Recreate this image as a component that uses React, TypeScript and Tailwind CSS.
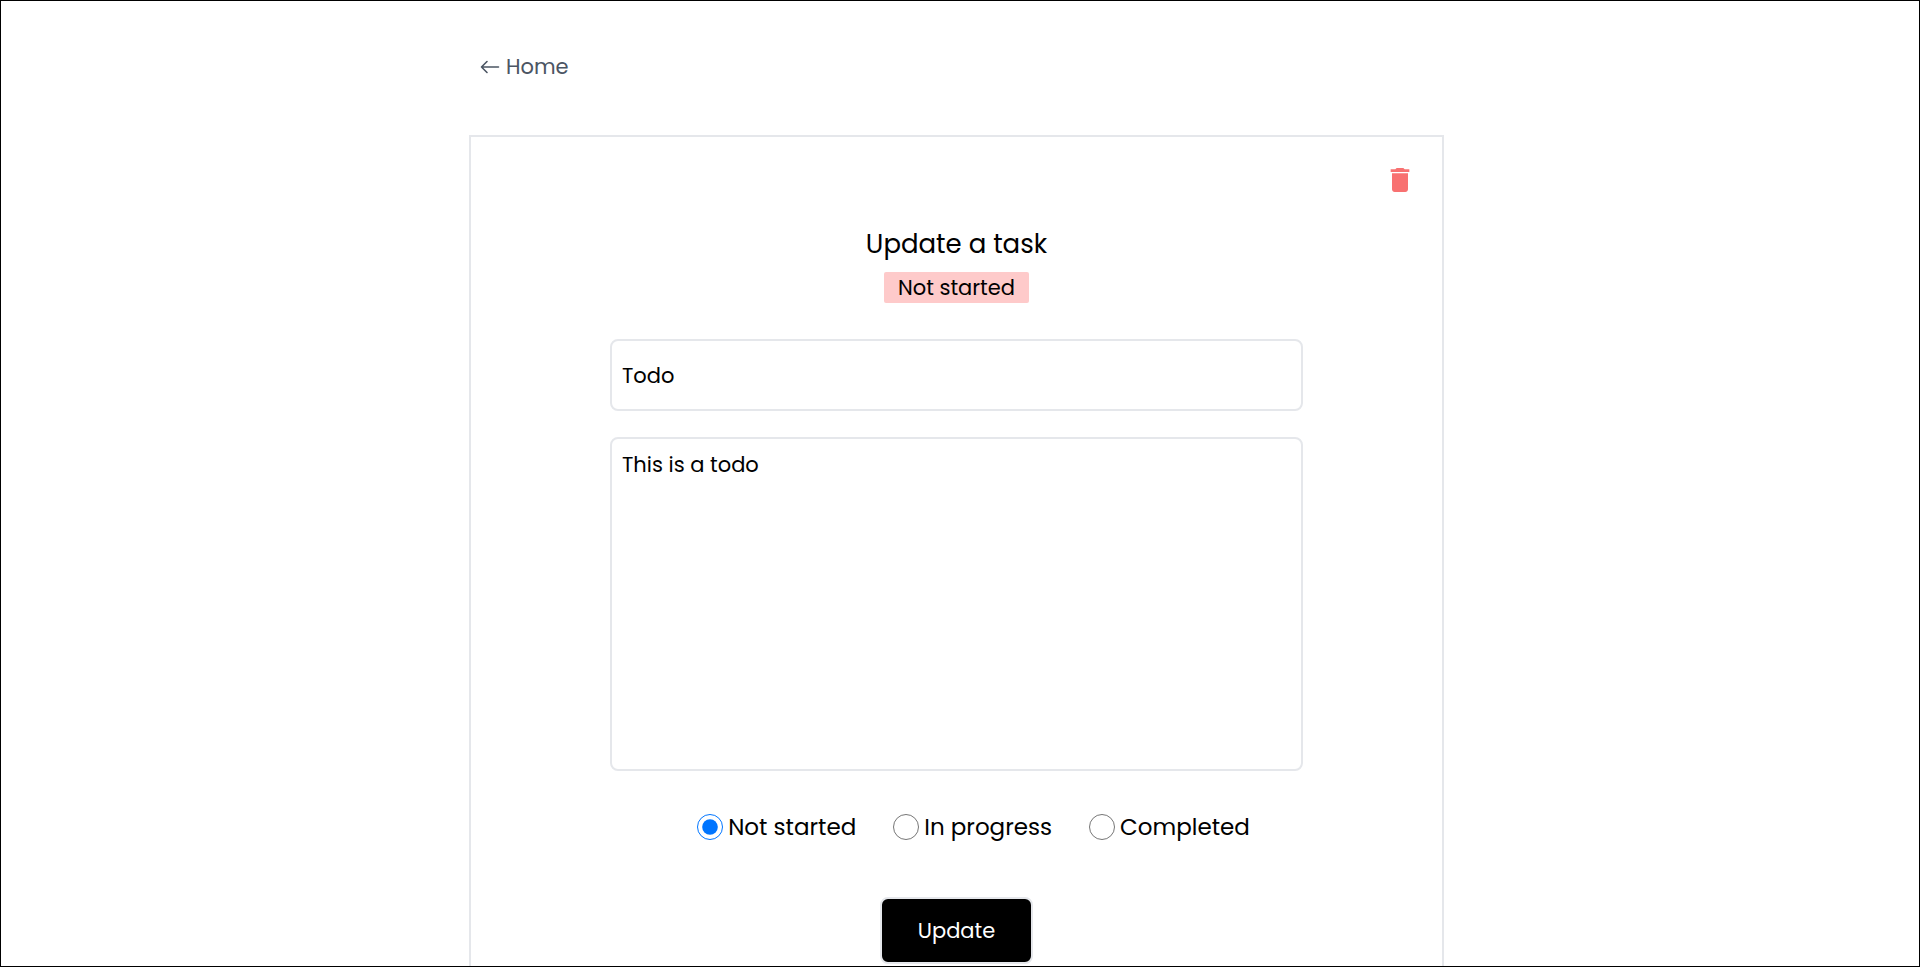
import { useState } from "react";

const statuses = ["Not started", "In progress", "Completed"];

function ArrowLeft() {
  return (
    <svg viewBox="0 0 20 16" className="h-4 w-5" fill="none" stroke="currentColor" strokeWidth="1.6" strokeLinecap="round" strokeLinejoin="round" aria-hidden="true">
      <path d="M18.5 8H1.5M7 2.5L1.5 8L7 13.5" />
    </svg>
  );
}

function TrashIcon() {
  return (
    <svg viewBox="0 0 24 24" className="size-8" fill="currentColor" aria-hidden="true">
      <path d="M6 19c0 1.1.9 2 2 2h8c1.1 0 2-.9 2-2V7H6v12zM19 4h-3.5l-1-1h-5l-1 1H5v2h14V4z" />
    </svg>
  );
}

export default function App() {
  const [status, setStatus] = useState("Not started");
  const [title, setTitle] = useState("Todo");
  const [description, setDescription] = useState("This is a todo");

  return (
    <div className="h-screen overflow-hidden border border-black bg-white pr-[7px] font-['Poppins','Inter',sans-serif] text-black">
      <main className="mx-auto w-full max-w-[975px]">
        <nav className="flex px-[11px] pt-[50px] pb-[52px]">
          <a href="#home" className="flex items-center gap-1.5 text-[21px] leading-8 text-[#4b5563]">
            <ArrowLeft />
            Home
          </a>
        </nav>
        <section className="flex flex-col border-2 border-[#e5e7eb] px-[26px] pt-[27px] pb-10">
          <button type="button" aria-label="Delete task" className="self-end text-[#f87171]">
            <TrashIcon />
          </button>
          <form className="mx-auto flex w-full max-w-[693px] flex-col items-center" onSubmit={(e) => e.preventDefault()}>
            <h1 className="mt-7 text-[26px] leading-10">Update a task</h1>
            <p className="mt-2 rounded-xs bg-[#fecaca] px-3.5 text-[21px] leading-[31px]">{status}</p>
            <input
              aria-label="Title"
              value={title}
              onChange={(e) => setTitle(e.target.value)}
              className="mt-9 h-[72px] w-full rounded-lg border-2 border-[#e5e7eb] px-2.5 text-[21px]"
            />
            <textarea
              aria-label="Description"
              value={description}
              onChange={(e) => setDescription(e.target.value)}
              className="mt-[26px] h-[334px] w-full resize-none rounded-lg border-2 border-[#e5e7eb] px-2.5 py-2.5 text-[21px] leading-8"
            />
            <fieldset className="mt-[38px] flex gap-[37px] pl-[34px]">
              {statuses.map((s) => (
                <label key={s} className="flex items-center gap-[5px] text-[23px] leading-9">
                  <input
                    type="radio"
                    name="status"
                    checked={status === s}
                    onChange={() => setStatus(s)}
                    className="size-[26px] accent-[#0075ff]"
                  />
                  {s}
                </label>
              ))}
            </fieldset>
            <button type="submit" className="mt-[52px] rounded-lg border-2 border-[#e5e7eb] bg-black px-9 py-4 text-[21px] leading-[31px] text-white">
              Update
            </button>
          </form>
        </section>
      </main>
    </div>
  );
}
